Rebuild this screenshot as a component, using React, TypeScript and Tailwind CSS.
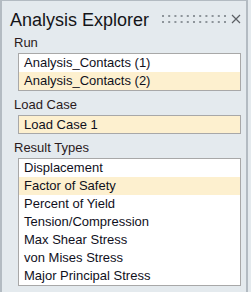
import React from 'react';

const runs = ['Analysis_Contacts (1)', 'Analysis_Contacts (2)'];
const resultTypes = [
  'Displacement',
  'Factor of Safety',
  'Percent of Yield',
  'Tension/Compression',
  'Max Shear Stress',
  'von Mises Stress',
  'Major Principal Stress',
];

const Grip: React.FC = () => (
  <svg width="64" height="9" viewBox="0 0 64 9" className="block">
    {Array.from({ length: 11 }).map((_, i) => (
      <g key={i} fill="#8d949a">
        <rect x={i * 6.2} y={0} width={2} height={2} />
        <rect x={i * 6.2} y={6} width={2} height={2} />
      </g>
    ))}
  </svg>
);

const Row: React.FC<{ text: string; selected?: boolean; h?: string }> = ({ text, selected, h = 'h-[18px]' }) => (
  <div
    className={`${h} pl-[5px] flex items-center text-[13px] leading-[18px] text-[#10101c] whitespace-nowrap ${
      selected ? 'bg-[#fdf0cf]' : 'bg-white'
    }`}
  >
    {text}
  </div>
);

const Label: React.FC<{ text: string }> = ({ text }) => (
  <div className="h-[20px] pl-[12px] text-[13px] leading-[20px] text-[#2a1a1c]">{text}</div>
);

export default function App() {
  return (
    <div className="w-[251px] h-[292px] bg-[#e4eaee] overflow-hidden" style={{ fontFamily: '"Liberation Sans", Arial, sans-serif' }}>
      <div className="w-[248px] h-[292px] border-t border-l-2 border-r-2 border-[#b3bbc2] bg-[#e4eaee]">
        {/* Header */}
        <div className="h-[32px] flex items-start pt-[8px]">
          <div className="pl-[8px] text-[18px] leading-[22px] text-[#141418]">Analysis Explorer</div>
          <div className="ml-[13px] mt-[6px]">
            <Grip />
          </div>
          <svg width="10" height="10" viewBox="0 0 10 10" className="ml-[5px] mt-[5px]">
            <path d="M1 1 L9 9 M9 1 L1 9" stroke="#5c6065" strokeWidth="1.2" />
          </svg>
        </div>

        <Label text="Run" />
        <div className="ml-[16px] w-[223px] border border-[#a8a8a8] bg-white">
          {runs.map((r, i) => (
            <Row key={r} text={r} selected={i === 1} />
          ))}
        </div>

        <div className="h-[4px]" />
        <Label text="Load Case" />
        <div className="ml-[16px] w-[223px] border border-[#a8a8a8] bg-white">
          <Row text="Load Case 1" selected h="h-[17px]" />
        </div>

        <div className="h-[4px]" />
        <Label text="Result Types" />
        <div className="ml-[16px] w-[223px] border border-[#a8a8a8] bg-white">
          {resultTypes.map((r, i) => (
            <Row key={r} text={r} selected={i === 1} />
          ))}
        </div>
      </div>
    </div>
  );
}
